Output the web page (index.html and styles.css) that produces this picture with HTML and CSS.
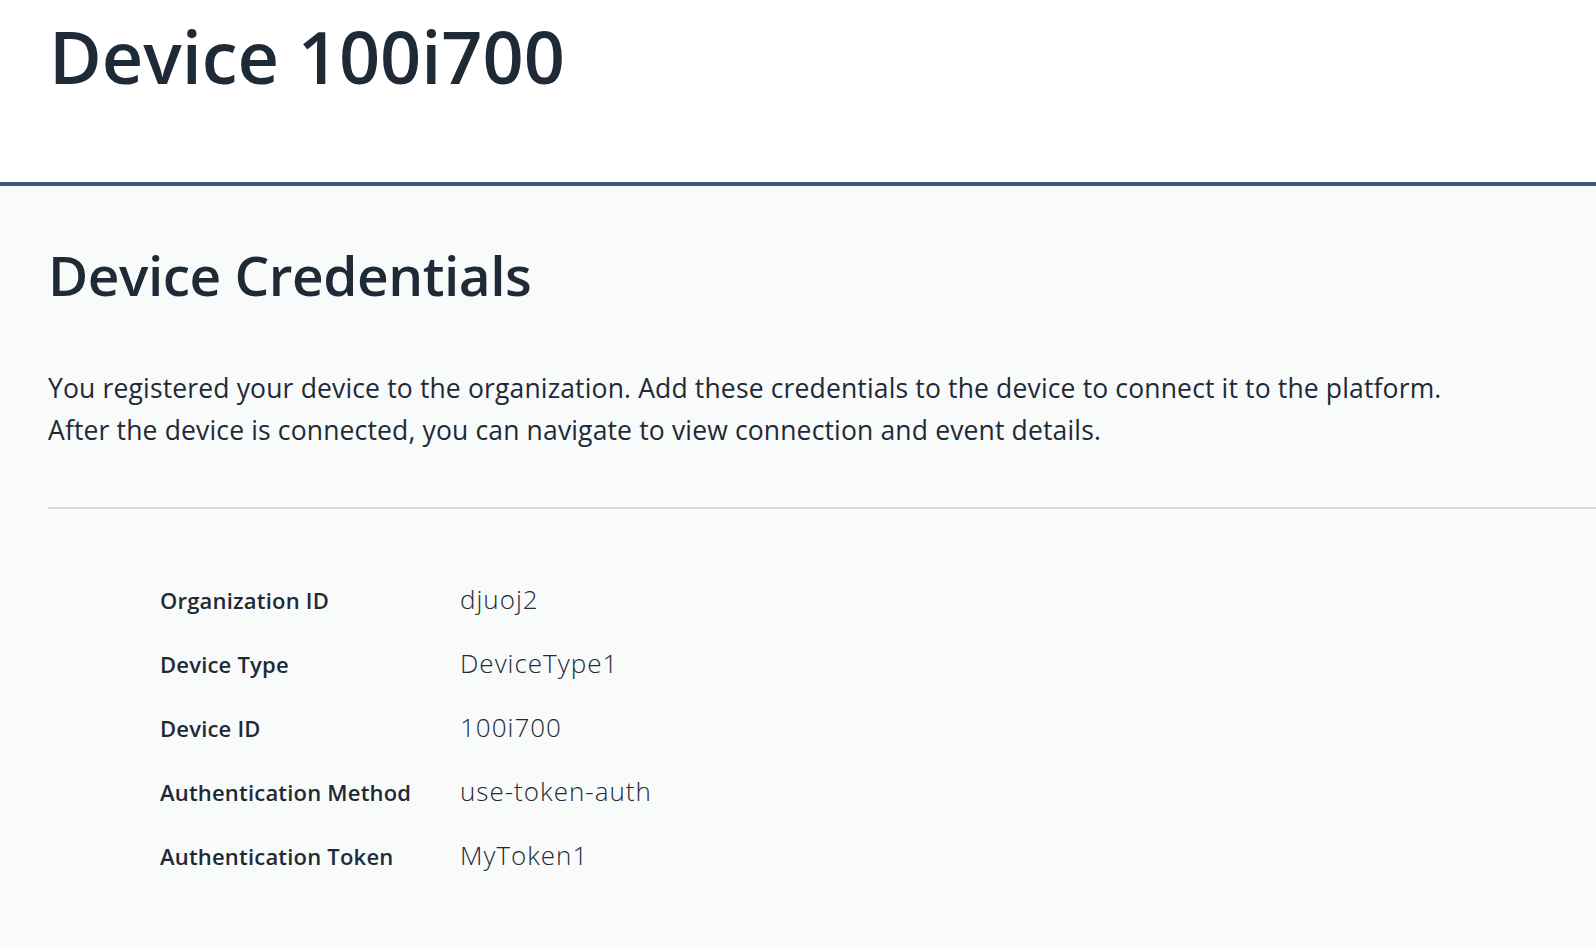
FILE: index.html
```html
<!DOCTYPE html>
<html lang="en">
<head>
<meta charset="utf-8">
<title>Device 100i700</title>
<link rel="stylesheet" href="styles.css">
</head>
<body>
<header class="page-header">
  <h1 class="page-title">Device 100i700</h1>
</header>
<main class="content">
  <h2 class="section-title">Device Credentials</h2>
  <p class="intro">You registered your device to the organization. Add these credentials to the device to connect it to the platform.<br>After the device is connected, you can navigate to view connection and event details.</p>
  <hr class="divider">
  <dl class="creds">
    <div class="row"><dt>Organization ID</dt><dd>djuoj2</dd></div>
    <div class="row"><dt>Device Type</dt><dd>DeviceType1</dd></div>
    <div class="row"><dt>Device ID</dt><dd>100i700</dd></div>
    <div class="row"><dt>Authentication Method</dt><dd>use-token-auth</dd></div>
    <div class="row"><dt>Authentication Token</dt><dd>MyToken1</dd></div>
  </dl>
</main>
</body>
</html>
```
FILE: styles.css
```css
html, body {
  margin: 0;
  padding: 0;
}
body {
  font-family: "Open Sans", "Noto Sans", sans-serif;
  color: #1f2a37;
  background: #f9fafa;
  min-height: 948px;
}
.page-header {
  background: #ffffff;
  height: 182px;
  border-bottom: 4px solid #3c5a78;
  padding-left: 49px;
  box-sizing: content-box;
}
.page-title {
  margin: 0;
  padding-top: 14px;
  font-size: 72px;
  font-weight: 600;
  line-height: 84px;
  letter-spacing: 0;
}
.content {
  padding: 0 0 0 48px;
}
.section-title {
  margin: 0;
  padding-top: 54px;
  font-size: 55px;
  font-weight: 600;
  line-height: 70px;
  letter-spacing: -0.5px;
}
.intro {
  margin: 57px 0 0 0;
  font-size: 26.5px;
  line-height: 42px;
  font-weight: 400;
  letter-spacing: 0.15px;
}
.divider {
  margin: 56px 0 0 0;
  border: 0;
  height: 2px;
  background: #d9d9d9;
}
.creds {
  margin: 0;
  padding: 72px 0 0 112px;
}
.row {
  display: flex;
  align-items: baseline;
  height: 64px;
}
.row dt {
  width: 300px;
  font-size: 22px;
  font-weight: 600;
  letter-spacing: 0.2px;
}
.row dd {
  margin: 0;
  font-size: 26px;
  font-weight: 300;
  letter-spacing: 1px;
}
```
